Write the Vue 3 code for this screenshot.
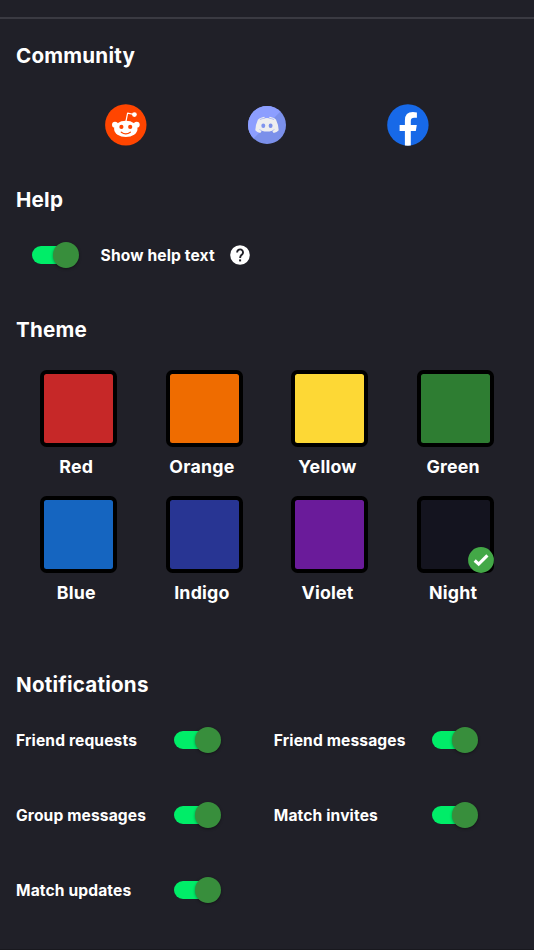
<script setup>
import { reactive, ref } from 'vue'

const themes = [
  { name: 'Red', color: '#c62828' },
  { name: 'Orange', color: '#ef6c00' },
  { name: 'Yellow', color: '#fdd835' },
  { name: 'Green', color: '#2e7d32' },
  { name: 'Blue', color: '#1565c0' },
  { name: 'Indigo', color: '#283593' },
  { name: 'Violet', color: '#6a1b9a' },
  { name: 'Night', color: '#14141f' },
]
const selected = ref('Night')
const showHelp = ref(true)
const notifications = reactive([
  { label: 'Friend requests', on: true },
  { label: 'Friend messages', on: true },
  { label: 'Group messages', on: true },
  { label: 'Match invites', on: true },
  { label: 'Match updates', on: true },
])
</script>

<template>
  <main class="page">
    <section class="community">
      <h2>Community</h2>
      <div class="socials">
        <svg width="42" height="42" viewBox="0 0 42 42">
          <circle cx="20.8" cy="20.9" r="20.7" fill="#ff4500" />
          <g fill="#fff">
            <circle cx="10" cy="20.7" r="3" />
            <circle cx="31.7" cy="20.7" r="3" />
            <ellipse cx="20.8" cy="24.9" rx="11.7" ry="8.1" />
            <circle cx="29.4" cy="10.6" r="2.4" />
          </g>
          <path d="M21 17.2 22.6 9.2 29 10.5" fill="none" stroke="#fff" stroke-width="1.2" stroke-linejoin="round" />
          <circle cx="16.4" cy="22.9" r="2.1" fill="#ff4500" />
          <circle cx="25.2" cy="22.9" r="2.1" fill="#ff4500" />
          <path d="M16.3 28.2Q20.8 31.5 25.3 28.2" fill="none" stroke="#ff4500" stroke-width="1.3" stroke-linecap="round" />
        </svg>
        <svg width="42" height="42" viewBox="0 0 42 42">
          <circle cx="21" cy="21" r="19" fill="#7b90ea" />
          <path d="M7.56 34.44A19 19 0 0 1 34.44 7.56Z" fill="#8c9eff" />
          <g transform="translate(21 0) scale(.89 1) translate(-21.05 0)">
            <path
              d="M15.2 13.4 18 12.8 18.8 14.2Q21 13.8 23.2 14.2L24 12.8 27 13.4Q30.4 14.4 31.2 15.8Q34.2 21.4 34.2 26.2Q32.4 28.5 28.5 28.9L26.8 26.7Q21 28.4 15.2 26.7L13.5 28.9Q9.6 28.5 7.9 26.2Q7.9 21.4 10.8 15.8Q12 14.4 15.2 13.4Z"
              fill="#eeeeef"
            />
            <path d="M13 15.6Q15.5 14.5 18.8 14.2M23.2 14.2Q26.5 14.5 29 15.6M12.6 25.5Q13.7 26.2 15.2 26.7M26.8 26.7Q28.3 26.2 29.4 25.5" fill="none" stroke="#8699f3" stroke-width=".6" />
            <ellipse cx="16.9" cy="21.7" rx="2.2" ry="2.2" fill="#7f94ef" />
            <ellipse cx="25.1" cy="21.7" rx="2.2" ry="2.2" fill="#7b90ea" />
          </g>
        </svg>
        <svg width="42" height="42" viewBox="0 0 42 42">
          <circle cx="20.9" cy="20.9" r="20.7" fill="#1769e8" />
          <path d="M17.9 41.5V27H12.6V21H17.9V16.4Q17.9 8.1 25.9 8.1Q28.1 8.1 29.9 8.5V13.7H27.2Q23.8 13.7 23.8 17V21H29.8L28.8 27H23.8V41.5Q20.9 41.8 17.9 41.5Z" fill="#fff" />
        </svg>
      </div>
    </section>

    <section class="help">
      <h2>Help</h2>
      <div class="help-row">
        <button class="toggle" :class="{ on: showHelp }" aria-label="Show help text" @click="showHelp = !showHelp"></button>
        <span class="label">Show help text</span>
        <svg class="question" width="20" height="20" viewBox="0 0 20 20">
          <circle cx="10" cy="10" r="9.8" fill="#fff" />
          <path d="M7.1 7.4A2.95 2.95 0 1 1 12 9.6Q10.1 11 10.1 12.9" fill="none" stroke="#202028" stroke-width="1.9" />
          <rect x="9.1" y="14.4" width="2" height="2" fill="#202028" />
        </svg>
      </div>
    </section>

    <section class="theme">
      <h2>Theme</h2>
      <div class="swatches">
        <div v-for="t in themes" :key="t.name" class="option" @click="selected = t.name">
          <div class="swatch" :style="{ backgroundColor: t.color }">
            <svg v-if="selected === t.name" class="check" width="26" height="26" viewBox="0 0 26 26">
              <circle cx="13" cy="13" r="12.9" fill="#43a847" />
              <path d="M6.7 13.5 10.7 17.2 19.4 8.3" fill="none" stroke="#fff" stroke-width="3.1" />
            </svg>
          </div>
          <span class="name">{{ t.name }}</span>
        </div>
      </div>
    </section>

    <section class="notifications">
      <h2>Notifications</h2>
      <div class="grid">
        <div v-for="n in notifications" :key="n.label" class="item">
          <span class="label">{{ n.label }}</span>
          <button class="toggle" :class="{ on: n.on }" :aria-label="n.label" @click="n.on = !n.on"></button>
        </div>
      </div>
    </section>
  </main>
</template>

<style>
body {
  margin: 0;
  background: #202028;
}
</style>

<style scoped>
.page {
  box-sizing: border-box;
  width: 534px;
  height: 950px;
  padding: 17px 0 0;
  overflow: hidden;
  background: #202028;
  border-bottom: 1px solid #18181e;
  color: #fff;
  font-family: Inter, "Liberation Sans", sans-serif;
  font-weight: 700;
}
section {
  box-sizing: border-box;
  padding: 0 16px;
}
h2 {
  margin: 0;
  padding-top: 1px;
  font-size: 20.6px;
  line-height: 28px;
  font-weight: 700;
  letter-spacing: 0.22px;
}
.community {
  height: 168px;
  padding-top: 22px;
  border-top: 2px solid #3a3a42;
}
.socials {
  display: flex;
  justify-content: center;
  gap: 99px;
  margin-top: 34px;
}
.help {
  height: 130px;
}
.help-row {
  display: flex;
  align-items: center;
  height: 26px;
  margin-top: 28px;
  padding-left: 16px;
}
.help-row .label {
  margin-left: 22px;
}
.question {
  margin-left: 15px;
}
.label {
  padding-top: 1px;
  font-size: 15.6px;
  line-height: 20px;
  letter-spacing: 0.12px;
  white-space: nowrap;
}
.toggle {
  display: flex;
  align-items: center;
  flex: none;
  width: 46.6px;
  height: 26px;
  padding: 0;
  border: 0;
  background: none;
}
.toggle::before {
  content: "";
  flex: none;
  width: 38px;
  height: 18.6px;
  border-radius: 9.3px;
  background: #00ed68;
}
.toggle::after {
  content: "";
  flex: none;
  width: 26px;
  height: 26px;
  margin-left: -17.4px;
  border-radius: 50%;
  background: #388e3c;
  box-shadow: 0 1px 3px rgba(0, 0, 0, 0.4);
}
.toggle:not(.on)::before {
  background: #666;
}
.theme {
  height: 355px;
}
.swatches {
  display: grid;
  grid-template-columns: repeat(4, 125.6px);
  grid-auto-rows: 125.6px;
  margin-top: 26px;
}
.option {
  display: flex;
  flex-direction: column;
  align-items: center;
}
.swatch {
  position: relative;
  box-sizing: border-box;
  width: 77px;
  height: 77px;
  border: 4px solid #000;
  border-radius: 6.5px;
}
.check {
  position: absolute;
  right: -4px;
  bottom: -4px;
}
.name {
  margin-top: 8px;
  padding-right: 5px;
  font-size: 17.8px;
  line-height: 24px;
  letter-spacing: 0.2px;
}
.grid {
  display: grid;
  grid-template-columns: 257.8px 1fr;
  grid-auto-rows: 75px;
  margin-top: 28px;
}
.item {
  display: flex;
  height: 26px;
  align-items: center;
}
.item .label {
  width: 158px;
}
</style>
